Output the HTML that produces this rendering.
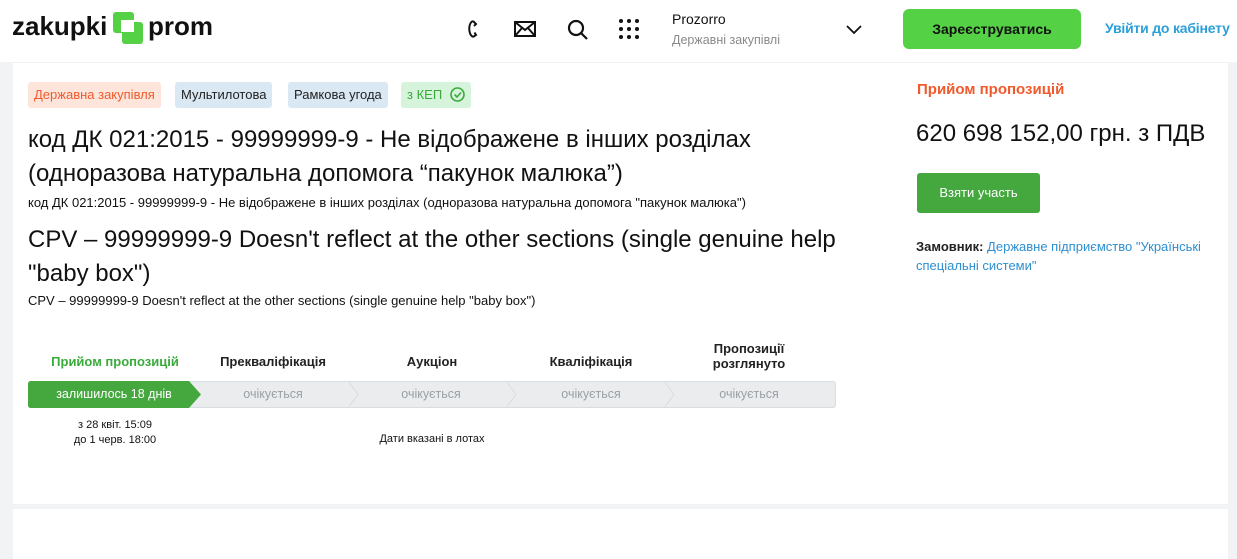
<!DOCTYPE html>
<html><head><meta charset="utf-8"><style>
*{margin:0;padding:0;box-sizing:border-box}
body{width:1237px;height:553px;background:#f2f3f5;font-family:"Liberation Sans","Noto Sans CJK SC",sans-serif;position:relative;overflow:hidden;color:#222}
.a{position:absolute}
.hdr{left:0;top:0;width:1237px;height:62px;background:#fff}
.card{background:#fff}
.tag{position:absolute;top:82px;height:26px;line-height:26px;font-size:13px;padding:0 6px;border-radius:3px}
.step{position:absolute;top:381px;height:27px;line-height:27px;text-align:center;font-size:12.5px;color:#9aa0a6}
.lbl{position:absolute;font-size:13px;font-weight:bold;text-align:center;color:#222;line-height:15px}
</style></head><body>
<div class="a hdr"></div>
<div class="a" style="left:12px;top:11px;font-size:26px;font-weight:bold;color:#111">zakupki</div>
<div class="a" style="left:113px;top:12px;width:21px;height:21px;background:#55d146;border-radius:3px"></div>
<div class="a" style="left:122px;top:22px;width:21px;height:22px;background:#55d146;border-radius:3px"></div>
<div class="a" style="left:121px;top:20px;width:13px;height:12px;background:#fff"></div>
<div class="a" style="left:148px;top:11px;font-size:26px;font-weight:bold;color:#111">prom</div>
<svg class="a" style="left:465px;top:18px" width="20" height="22" viewBox="0 0 20 22" fill="none" stroke="#111" stroke-width="2"><path d="M8 3 C3 5 3 16 8 19 M8 3 l3 3 l-2 2 M8 19 l3-2 l-1.5-2.5"/></svg>
<svg class="a" style="left:514px;top:21px" width="22" height="16" viewBox="0 0 22 16" fill="none" stroke="#111" stroke-width="2"><rect x="1" y="1" width="20" height="14"/><path d="M1 1 L11 9 L21 1 M1 15 L8 7 M21 15 L14 7"/></svg>
<svg class="a" style="left:567px;top:19px" width="22" height="22" viewBox="0 0 22 22" fill="none" stroke="#111" stroke-width="2.2"><circle cx="9" cy="9" r="7"/><path d="M14 14 L20 20"/></svg>
<svg class="a" style="left:618px;top:18px" width="22" height="22" fill="#111"><circle cx="3" cy="3" r="2"/><circle cx="11" cy="3" r="2"/><circle cx="19" cy="3" r="2"/><circle cx="3" cy="11" r="2"/><circle cx="11" cy="11" r="2"/><circle cx="19" cy="11" r="2"/><circle cx="3" cy="19" r="2"/><circle cx="11" cy="19" r="2"/><circle cx="19" cy="19" r="2"/></svg>
<div class="a" style="left:672px;top:11px;font-size:14px;color:#111">Prozorro</div>
<div class="a" style="left:672px;top:33px;font-size:12.5px;color:#8a8a8a">Державні закупівлі</div>
<svg class="a" style="left:846px;top:25px" width="16" height="10" fill="none" stroke="#111" stroke-width="1.8"><path d="M1 1 L8 8 L15 1"/></svg>
<div class="a" style="left:903px;top:9px;width:178px;height:40px;background:#55d146;border-radius:6px;text-align:center;line-height:40px;font-size:14px;font-weight:bold;color:#111">Зареєструватись</div>
<div class="a" style="left:1105px;top:20px;font-size:14px;font-weight:bold;color:#2d9fd9;letter-spacing:-0.2px">Увійти до кабінету</div>

<div class="a card" style="left:13px;top:63px;width:1215px;height:441px"></div>
<div class="a card" style="left:13px;top:509px;width:1215px;height:50px"></div>

<div class="tag" style="left:28px;background:#fde5dc;color:#f05a2c">Державна закупівля</div>
<div class="tag" style="left:175px;background:#dae8f3;color:#222">Мультилотова</div>
<div class="tag" style="left:288px;background:#dae8f3;color:#222">Рамкова угода</div>
<div class="tag" style="left:401px;width:70px;background:#d6f3dc;color:#3aab3a">з КЕП <svg style="vertical-align:-3px;margin-left:4px" width="15" height="15" fill="none" stroke="#3aab3a" stroke-width="1.6"><circle cx="7.5" cy="7.5" r="6.5"/><path d="M4.5 7.5 L7 10 L11 5.5"/></svg></div>

<div class="a" style="left:28px;top:123px;width:820px;font-size:24px;line-height:34px;color:#111">код ДК 021:2015 - 99999999-9 - Не відображене в інших розділах (одноразова натуральна допомога “пакунок малюка”)</div>
<div class="a" style="left:28px;top:195px;font-size:13px;color:#111">код ДК 021:2015 - 99999999-9 - Не відображене в інших розділах (одноразова натуральна допомога "пакунок малюка")</div>
<div class="a" style="left:28px;top:223px;width:840px;font-size:24px;line-height:34px;color:#111">CPV – 99999999-9 Doesn't reflect at the other sections (single genuine help "baby box")</div>
<div class="a" style="left:28px;top:293px;font-size:13px;color:#111">CPV – 99999999-9 Doesn't reflect at the other sections (single genuine help "baby box")</div>

<div class="lbl" style="left:40px;width:150px;top:354px;color:#3aab3a">Прийом пропозицій</div>
<div class="lbl" style="left:198px;width:150px;top:354px">Прекваліфікація</div>
<div class="lbl" style="left:357px;width:150px;top:354px">Аукціон</div>
<div class="lbl" style="left:516px;width:150px;top:354px">Кваліфікація</div>
<div class="lbl" style="left:674px;width:150px;top:341px">Пропозиції<br>розглянуто</div>

<div class="a" style="left:28px;top:381px;width:808px;height:27px;background:#eaecee;border:1px solid #d8dde2;border-radius:3px"></div>
<svg class="a" style="left:28px;top:381px" width="808" height="27" fill="none" stroke="#d8dde2" stroke-width="1"><path d="M320 0 L330 13.5 L320 27 M478 0 L488 13.5 L478 27 M636 0 L646 13.5 L636 27"/></svg>
<svg class="a" style="left:28px;top:381px" width="175" height="27"><path d="M3 0 H161 L173 13.5 L161 27 H3 Q0 27 0 24 V3 Q0 0 3 0Z" fill="#45a83e"/></svg>
<div class="step" style="left:28px;width:172px;color:#fff">залишилось 18 днів</div>
<div class="step" style="left:200px;width:146px">очікується</div>
<div class="step" style="left:358px;width:146px">очікується</div>
<div class="step" style="left:516px;width:150px">очікується</div>
<div class="step" style="left:674px;width:150px">очікується</div>

<div class="a" style="left:40px;width:150px;top:418px;font-size:11px;line-height:15px;text-align:center;color:#111">з 28 квіт. 15:09<br>до 1 черв. 18:00</div>
<div class="a" style="left:357px;width:150px;top:433px;font-size:11px;text-align:center;color:#111">Дати вказані в лотах</div>

<div class="a" style="left:917px;top:81px;font-size:15px;font-weight:bold;color:#f05a2c">Прийом пропозицій</div>
<div class="a" style="left:916px;top:120px;font-size:24px;color:#111">620 698 152,00 грн. з ПДВ</div>
<div class="a" style="left:917px;top:173px;width:123px;height:40px;background:#45a83e;border-radius:3px;color:#fff;font-size:13px;text-align:center;line-height:40px">Взяти участь</div>
<div class="a" style="left:916px;top:237px;width:300px;font-size:13px;line-height:19px;color:#2d8fd0"><b style="color:#222">Замовник:</b> Державне підприємство "Українські спеціальні системи"</div>
</body></html>
